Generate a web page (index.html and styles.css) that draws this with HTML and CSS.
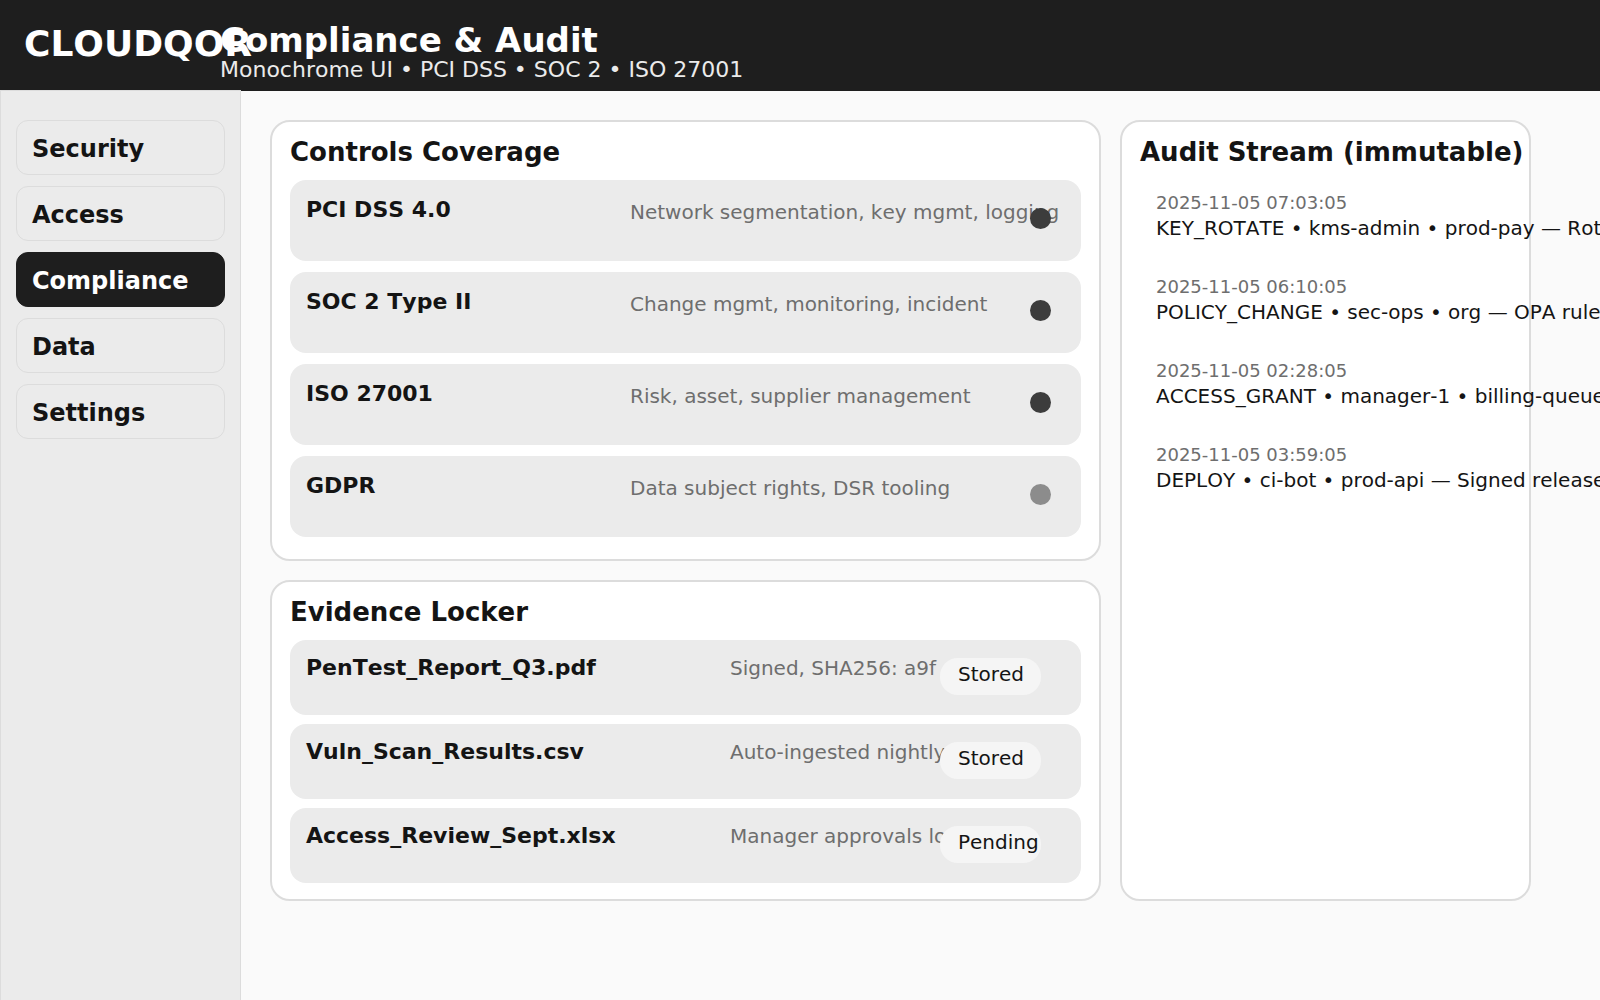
FILE: index.html
```html
<!DOCTYPE html>
<html lang="en">
<head>
  <meta charset="utf-8">
  <meta name="viewport" content="width=device-width, initial-scale=1">
  <title>Compliance &amp; Audit</title>
  <link rel="stylesheet" href="styles.css">
</head>
<body>
  <header class="topbar">
    <div class="brand">CLOUDQOR</div>
    <div class="heading">
      <h1 class="heading-title">Compliance &amp; Audit</h1>
      <p class="heading-sub">Monochrome UI • PCI DSS • SOC 2 • ISO 27001</p>
    </div>
  </header>
  <div class="shell">
    <nav class="sidebar" aria-label="Sections">
      <a class="nav-item" href="#security">Security</a>
      <a class="nav-item" href="#access">Access</a>
      <a class="nav-item nav-item-active" href="#compliance" aria-current="page">Compliance</a>
      <a class="nav-item" href="#data">Data</a>
      <a class="nav-item" href="#settings">Settings</a>
    </nav>
    <main class="content">
      <div class="column">
        <section class="card controls">
          <h2 class="card-title">Controls Coverage</h2>
          <ul class="rows">
            <li class="row">
              <h3 class="row-name">PCI DSS 4.0</h3>
              <p class="row-note">Network segmentation, key mgmt, logging</p>
              <span class="dot"></span>
            </li>
            <li class="row">
              <h3 class="row-name">SOC 2 Type II</h3>
              <p class="row-note">Change mgmt, monitoring, incident</p>
              <span class="dot"></span>
            </li>
            <li class="row">
              <h3 class="row-name">ISO 27001</h3>
              <p class="row-note">Risk, asset, supplier management</p>
              <span class="dot"></span>
            </li>
            <li class="row">
              <h3 class="row-name">GDPR</h3>
              <p class="row-note">Data subject rights, DSR tooling</p>
              <span class="dot dot-partial"></span>
            </li>
          </ul>
        </section>
        <section class="card evidence">
          <h2 class="card-title">Evidence Locker</h2>
          <ul class="rows">
            <li class="row">
              <h3 class="row-name">PenTest_Report_Q3.pdf</h3>
              <p class="row-note">Signed, SHA256: a9f</p>
              <span class="badge">Stored</span>
            </li>
            <li class="row">
              <h3 class="row-name">Vuln_Scan_Results.csv</h3>
              <p class="row-note">Auto-ingested nightly</p>
              <span class="badge">Stored</span>
            </li>
            <li class="row">
              <h3 class="row-name">Access_Review_Sept.xlsx</h3>
              <p class="row-note">Manager approvals lo</p>
              <span class="badge">Pending</span>
            </li>
          </ul>
        </section>
      </div>
      <section class="card">
        <h2 class="card-title">Audit Stream (immutable)</h2>
        <ol class="stream">
          <li class="event">
            <time class="event-time" datetime="2025-11-05T07:03:05">2025-11-05 07:03:05</time>
            <p class="event-text">KEY_ROTATE • kms-admin • prod-pay — Rot</p>
          </li>
          <li class="event">
            <time class="event-time" datetime="2025-11-05T06:10:05">2025-11-05 06:10:05</time>
            <p class="event-text">POLICY_CHANGE • sec-ops • org — OPA rule</p>
          </li>
          <li class="event">
            <time class="event-time" datetime="2025-11-05T02:28:05">2025-11-05 02:28:05</time>
            <p class="event-text">ACCESS_GRANT • manager-1 • billing-queue</p>
          </li>
          <li class="event">
            <time class="event-time" datetime="2025-11-05T03:59:05">2025-11-05 03:59:05</time>
            <p class="event-text">DEPLOY • ci-bot • prod-api — Signed release</p>
          </li>
        </ol>
      </section>
    </main>
  </div>
</body>
</html>
```
FILE: styles.css
```css
* {
  box-sizing: border-box;
}

body,
h1,
h2,
h3,
p,
ul,
ol {
  margin: 0;
  padding: 0;
}

ul,
ol {
  list-style: none;
}

body {
  display: flex;
  flex-direction: column;
  min-height: 100vh;
  overflow-x: hidden;
  background: #fafafa;
  color: #141414;
  font-family: "DejaVu Sans", Verdana, sans-serif;
  font-size: 20px;
  font-kerning: none;
  white-space: nowrap;
}

/* Top bar */

.topbar {
  display: flex;
  align-items: flex-start;
  padding: 22px 24px 9px;
  background: #1e1e1e;
  color: #ffffff;
}

.brand {
  flex: none;
  width: 196px;
  font-size: 36px;
  font-weight: bold;
  line-height: 44px;
}

.heading-title {
  font-size: 34px;
  line-height: 36px;
}

.heading-sub {
  color: #ebebeb;
  font-size: 22px;
  line-height: 24px;
}

/* Sidebar */

.shell {
  display: flex;
  flex: 1;
}

.sidebar {
  display: flex;
  flex: none;
  flex-direction: column;
  gap: 11px;
  width: 241px;
  margin-top: -1px;
  padding: 29px 15px;
  border: 1px solid #dcdcdc;
  border-bottom: 0;
  background: #ebebeb;
}

.nav-item {
  display: flex;
  align-items: center;
  height: 55px;
  padding: 2px 15px 0;
  border: 1px solid #dcdcdc;
  border-radius: 12px;
  color: #141414;
  font-size: 24px;
  font-weight: bold;
  text-decoration: none;
}

.nav-item-active {
  border-color: #1e1e1e;
  background: #1e1e1e;
  color: #ffffff;
}

/* Cards */

.content {
  display: grid;
  flex: 1;
  grid-template-columns: minmax(0, 831fr) minmax(0, 411fr);
  gap: 19px;
  align-self: flex-start;
  min-width: 0;
  padding: 29px 69px 29px 29px;
}

.column {
  display: flex;
  flex-direction: column;
  gap: 19px;
}

.card {
  padding: 14px 18px 16px;
  border: 2px solid #dcdcdc;
  border-radius: 20px;
  background: #ffffff;
}

.card-title {
  margin-bottom: 12px;
  font-size: 26px;
  line-height: 32px;
}

.rows {
  display: flex;
  flex-direction: column;
}

.row {
  display: grid;
  align-items: start;
  border-radius: 16px;
  background: #ebebeb;
}

.row-name {
  font-size: 22px;
  line-height: 28px;
}

.row-note {
  color: #6e6e6e;
  line-height: 28px;
}

.controls {
  padding-bottom: 22px;
}

.controls .rows {
  gap: 11px;
}

.controls .row {
  grid-template-columns: 324px minmax(0, 1fr) 21px;
  min-height: 81px;
  padding: 16px 30px 16px 16px;
}

.controls .row-note {
  padding-top: 2px;
}

.dot {
  width: 21px;
  height: 21px;
  margin-top: 12px;
  border-radius: 50%;
  background: #3c3c3c;
}

.dot-partial {
  background: #8c8c8c;
}

.evidence .rows {
  gap: 9px;
}

.evidence .row {
  grid-template-columns: 424px minmax(0, 1fr) 101px;
  min-height: 75px;
  padding: 14px 40px 14px 16px;
}

.badge {
  height: 37px;
  margin-top: 4px;
  padding-left: 18px;
  border-radius: 18px;
  background: #f5f5f5;
  line-height: 32px;
}

/* Audit stream */

.stream {
  display: flex;
  flex-direction: column;
  gap: 34px;
  padding: 11px 16px;
}

.event-time {
  display: block;
  color: #6e6e6e;
  font-size: 18px;
  line-height: 24px;
}

.event-text {
  line-height: 26px;
}
```
